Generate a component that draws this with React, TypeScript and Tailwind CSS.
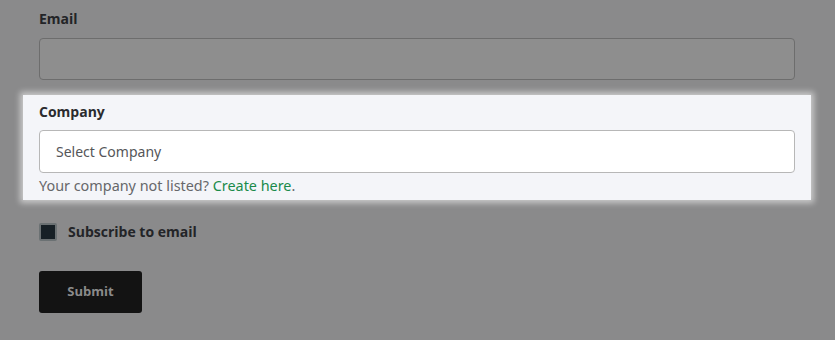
export default function App() {
  return (
    <div className="min-h-[340px] w-full bg-[#8a8a8b] font-['Open_Sans',sans-serif]">
      <div className="w-[756px] ml-[39px] pt-[9px]">
        {/* Email */}
        <label className="block text-[14px] leading-5 font-bold text-[#232427]">Email</label>
        <div className="mt-[9px] h-[42px] rounded-[4px] border border-[#6d6d6d] bg-[#8e8e8e]" />

        {/* Highlighted company block */}
        <div className="-mx-4 mt-[15px] px-4 pt-[7px] pb-1 bg-[#f4f5f9] shadow-[0_0_6px_3px_rgba(255,255,255,0.55)] w-[788px]">
          <label className="block text-[14px] leading-5 font-bold text-[#2a2b2e]">Company</label>
          <div className="mt-2 h-[43px] rounded-[4px] border border-[#b7b7b7] bg-white flex items-center px-4 font-['Noto_Sans',sans-serif] text-[14px] text-[#555659]">
            Select Company
          </div>
          <p className="mt-[3px] font-['Noto_Sans',sans-serif] text-[14.4px] leading-5 text-[#66676a]">
            Your company not listed? <span className="text-[#1a8a4a]">Create here</span>.
          </p>
        </div>

        {/* Subscribe */}
        <div className="mt-[23px] flex items-center h-[18px]">
          <span className="w-[18px] h-[18px] rounded-[2px] border-2 border-[#6b7173] bg-[#172026]" />
          <span className="ml-[11px] text-[14px] leading-5 font-bold text-[#232427]">Subscribe to email</span>
        </div>

        {/* Submit */}
        <button className="mt-[30px] w-[103px] h-[42px] rounded-[3px] bg-[#131313] text-[13px] font-bold text-[#8b8b8b]">
          Submit
        </button>
      </div>
    </div>
  );
}
